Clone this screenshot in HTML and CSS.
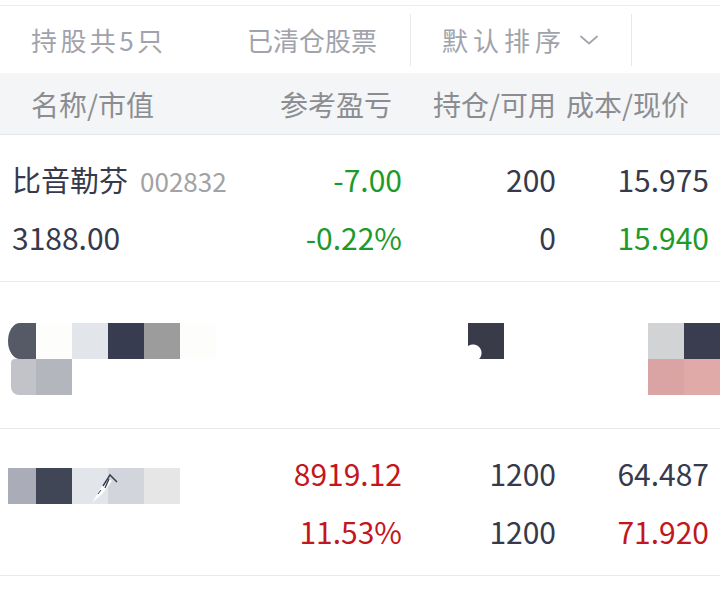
FILE: index.html
```html
<!DOCTYPE html>
<html lang="zh-CN">
<head>
<meta charset="utf-8">
<title>持仓</title>
<link rel="stylesheet" href="styles.css">
</head>
<body>
<div class="app">
  <div class="topgap"></div>
  <div class="tabs">
    <div class="tab tab-hold">持股共5只</div>
    <div class="tab tab-clear">已清仓股票</div>
    <div class="divider"></div>
    <div class="tab tab-sort">默认排序<svg class="chev" width="18" height="10" viewBox="0 0 18 10"><path d="M1 1.5 L9 8.5 L17 1.5" fill="none" stroke="#a3a6af" stroke-width="1.8" stroke-linecap="round" stroke-linejoin="round"/></svg></div>
    <div class="divider"></div>
  </div>
  <div class="thead">
    <div class="th th-name">名称/市值</div>
    <div class="th">参考盈亏</div>
    <div class="th">持仓/可用</div>
    <div class="th">成本/现价</div>
  </div>

  <div class="row">
    <div class="cell cell-name"><span class="name">比音勒芬</span><span class="code">002832</span></div>
    <div class="cell num green">-7.00</div>
    <div class="cell num">200</div>
    <div class="cell num">15.975</div>
    <div class="cell num cell-name">3188.00</div>
    <div class="cell num green">-0.22%</div>
    <div class="cell num">0</div>
    <div class="cell num green">15.940</div>
  </div>

  <div class="row row-hidden">
    <div class="mosaic">
      <div class="mline">
        <div class="mc"><div class="mi m-a0"></div></div>
        <div class="mc m-white"></div>
        <div class="mc m-pale"></div>
        <div class="mc m-navy"></div>
        <div class="mc m-gray"></div>
        <div class="mc m-white"></div>
        <div class="mc"></div><div class="mc"></div><div class="mc"></div><div class="mc"></div>
        <div class="mc"></div><div class="mc"></div><div class="mc"></div>
        <div class="mc m-dark-dot"></div>
        <div class="mc"></div><div class="mc"></div><div class="mc"></div><div class="mc"></div>
        <div class="mc m-silver"></div>
        <div class="mc m-navy2"></div>
      </div>
      <div class="mline">
        <div class="mc"><div class="mi m-b0"></div></div>
        <div class="mc m-b1"></div>
        <div class="mc"></div><div class="mc"></div><div class="mc"></div><div class="mc"></div>
        <div class="mc"></div><div class="mc"></div><div class="mc"></div><div class="mc"></div>
        <div class="mc"></div><div class="mc"></div><div class="mc"></div><div class="mc"></div>
        <div class="mc"></div><div class="mc"></div><div class="mc"></div><div class="mc"></div>
        <div class="mc m-rose1"></div>
        <div class="mc m-rose2"></div>
      </div>
    </div>
  </div>

  <div class="row">
    <div class="cell cell-mosaic">
      <div class="mline">
        <div class="mc"><div class="mi m-c0"></div></div>
        <div class="mc m-slate"></div>
        <div class="mc m-pale"></div>
        <div class="mc m-light"></div>
        <div class="mc m-fog"></div>
      </div>
      <svg class="scratch" width="48" height="36" viewBox="0 0 48 36"><polygon points="20,35 29,20 36,10 40,13 31,25" fill="#ffffff"/><path d="M31 18 L38 7 L45 14" fill="none" stroke="#3a3f50" stroke-width="1.5"/><path d="M37 11 L33 20" fill="none" stroke="#3a3f50" stroke-width="1.3"/><path d="M26 26 L29 22" fill="none" stroke="#3a3f50" stroke-width="1"/></svg>
    </div>
    <div class="cell num red">8919.12</div>
    <div class="cell num">1200</div>
    <div class="cell num">64.487</div>
    <div class="cell num red">11.53%</div>
    <div class="cell num">1200</div>
    <div class="cell num red">71.920</div>
  </div>
</div>
</body>
</html>
```

FILE: styles.css
```css
* { box-sizing: border-box; }
body {
  margin: 0;
  background: #ffffff;
  font-family: "Noto Sans CJK SC", "Noto Sans", sans-serif;
}
.app { width: 720px; }

.topgap {
  height: 6px;
  border-bottom: 1px solid #ececee;
}

.tabs {
  height: 67px;
  display: flex;
  align-items: center;
  background: #fff;
}
.tab {
  font-size: 26px;
  line-height: 36px;
  color: #a0a3ac;
  white-space: nowrap;
}
.tab-hold { width: 218px; padding-left: 31px; letter-spacing: 3.4px; }
.tab-clear { width: 192px; padding-left: 29px; }
.tab-sort {
  width: 220px;
  padding-left: 31px;
  letter-spacing: 5px;
  display: flex;
  align-items: center;
}
.chev { margin-left: 14px; }
.divider {
  width: 1px;
  height: 52px;
  background: #e8e8ea;
}

.thead {
  height: 62px;
  background: #f4f5f7;
  border-bottom: 1px solid #e6e7ea;
  display: grid;
  grid-template-columns: 219px 142px 164px 133px;
  padding: 0 31px;
  align-items: center;
}
.th {
  font-size: 28px;
  color: #8c8d92;
  text-align: right;
  white-space: nowrap;
}
.th-name { text-align: left; }

.row {
  height: 147px;
  border-bottom: 1px solid #e8e9ec;
  display: grid;
  grid-template-columns: 238px 152px 154px 153px;
  grid-template-rows: 40px 40px;
  row-gap: 18px;
  align-content: center;
  padding: 0 11px 0 12px;
}
.cell {
  line-height: 40px;
  font-size: 30px;
  color: #363a4c;
  text-align: right;
  white-space: nowrap;
}
.num { font-variant-numeric: proportional-nums; }
.cell-name { text-align: left; }
.name { font-size: 29px; color: #363a4c; }
.code { font-size: 26px; color: #a2a2a4; margin-left: 12px; }
.green { color: #1e9a2b; }
.red { color: #c3161d; }

/* pixelated (hidden) rows */
.row-hidden {
  display: block;
  align-content: start;
  padding: 41px 0 0 0;
}
.mosaic { display: flex; flex-direction: column; }
.mline { display: flex; height: 36px; }
.mc { width: 36px; height: 36px; flex: none; }
.mi { height: 36px; }
.m-a0 { margin-left: 8px; background: #565a67; border-radius: 12px 0 0 12px / 18px 0 0 18px; }
.m-b0 { margin-left: 11px; background: #c1c3c8; border-radius: 4px 0 0 8px; }
.m-c0 { margin-left: 8px; background: #aaadb8; }
.m-b1 { background: #b4b6bd; }
.m-white { background: #fdfdfb; }
.m-pale { background: #e2e5ea; }
.m-navy { background: #373c51; }
.m-gray { background: #9c9c9c; }
.m-dark-dot { background: radial-gradient(circle at 5px 30px, #ffffff 8px, transparent 9px), #393c48; }
.m-silver { background: #d1d3d5; }
.m-navy2 { background: #393d4f; }
.m-rose1 { background: #d9a4a3; }
.m-rose2 { background: #e0aaa9; }
.m-slate { background: #414656; }
.m-light { background: #d2d5db; }
.m-fog { background: #e6e6e6; }

.cell-mosaic {
  grid-row: 1 / span 2;
  grid-column: 1;
  margin-left: -12px;
  margin-top: 15px;
  position: relative;
}
.scratch {
  position: absolute;
  left: 72px;
  top: 0;
}
```
